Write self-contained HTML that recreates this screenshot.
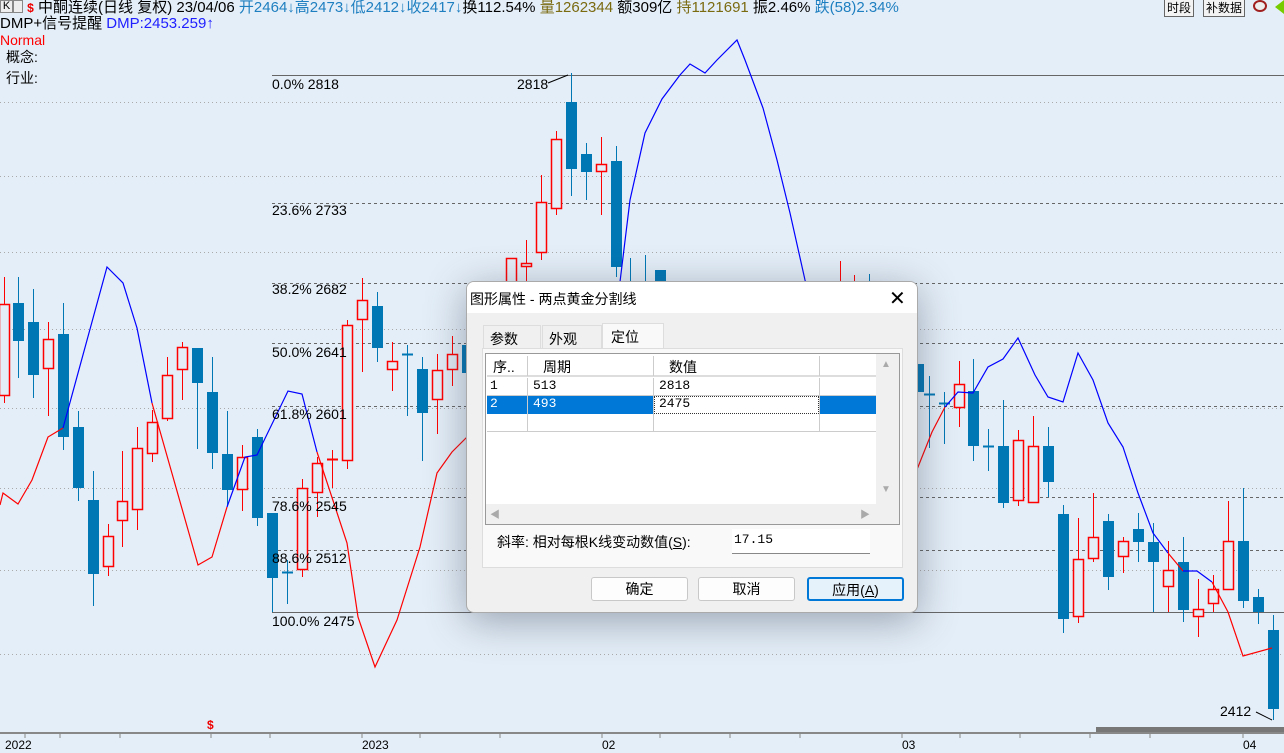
<!DOCTYPE html>
<html><head><meta charset="utf-8"><style>
*{margin:0;padding:0;box-sizing:border-box}
body{width:1284px;height:741px;overflow:hidden;background:#e4eef8;font-family:"Liberation Sans","Noto Sans CJK SC",sans-serif;position:relative}
.t{position:absolute;white-space:nowrap;font-size:14px;line-height:16px}
svg{position:absolute;left:0;top:0}
#dlg{position:absolute;left:466px;top:281px;width:452px;height:332px;background:#f0f0f0;border:1px solid #aaa;border-radius:8px;box-shadow:0 8px 40px rgba(60,70,90,.45);overflow:hidden;font-size:14px}
#dlg .ttl{height:31px;background:#fff;padding:7px 0 0 3px;font-size:14px}
.abs{position:absolute}
.btn{position:absolute;top:295px;height:24px;width:97px;border:1px solid #c8c8c8;border-radius:3px;background:#fdfdfd;text-align:center;line-height:22px}
</style></head><body>
<svg width="1284" height="741" id="ch"></svg>
<div class="t" style="left:0;top:0;font-size:15px">
<span style="display:inline-block;width:13px;height:13px;border:1px solid #888;font-size:11px;line-height:11px;text-align:center;vertical-align:top;background:#eee">K</span><span style="display:inline-block;width:10px;height:13px;border:1px solid #888;vertical-align:top;background:#eee"></span>
<b style="color:#e00;font-size:12px">$</b> 中酮连续(日线 复权) 23/04/06 <span style="color:#1e7fc0">开2464↓高2473↓低2412↓收2417↓</span>换112.54% <span style="color:#7a6a10">量1262344</span> 额309亿 <span style="color:#7a6a10">持1121691</span> 振2.46% <span style="color:#1e7fc0">跌(58)2.34%</span></div>
<div class="t" style="left:0;top:16px;font-size:15px">DMP+信号提醒 <span style="color:#2020ff">DMP:2453.259↑</span></div>
<div class="t" style="left:0;top:32px;color:#f00">Normal</div>
<div class="t" style="left:6px;top:49px">概念:</div>
<div class="t" style="left:6px;top:70px">行业:</div>
<div class="t" style="left:1164px;top:0;font-size:12px;border:1px solid #666;border-top:none;padding:0 2px;background:#f3f3f3">时段</div>
<div class="t" style="left:1203px;top:0;font-size:12px;border:1px solid #666;border-top:none;padding:0 2px;background:#f3f3f3">补数据</div>
<div class="abs" style="left:1253px;top:0;width:14px;height:12px;border-radius:50%;border:2px solid #a02020;background:#eee"></div>
<div class="abs" style="left:1275px;top:0;width:0;height:0;border-top:7px solid transparent;border-bottom:7px solid transparent;border-right:9px solid #7c0"></div>
<div id="lbl"></div>

<div id="dlg">
<div class="ttl">图形属性 - 两点黄金分割线</div>
<div class="abs" style="left:422px;top:4px;font-size:20px">✕</div>
<div class="abs" style="left:16px;top:43px;width:58px;height:23px;border:1px solid #ddd;border-bottom:none;padding:3px 0 0 6px">参数</div>
<div class="abs" style="left:75px;top:43px;width:60px;height:23px;border:1px solid #ddd;border-bottom:none;padding:3px 0 0 6px">外观</div>
<div class="abs" style="left:135px;top:41px;width:62px;height:27px;background:#f9f9f9;border:1px solid #ddd;border-bottom:none;padding:3px 0 0 8px">定位</div>
<div class="abs" style="left:15px;top:66px;width:421px;height:220px;background:#f9f9f9;border:1px solid #ddd"></div>
<div class="abs" style="left:18px;top:71px;width:415px;height:172px;background:#fff;border:1px solid #999"></div>
<div class="abs" style="left:20px;top:73px;width:389px;height:22px;background:#fff;border-bottom:2px solid #ddd"></div>
<div class="abs" style="left:60px;top:74px;width:1px;height:20px;background:#ccc"></div>
<div class="abs" style="left:186px;top:74px;width:1px;height:20px;background:#ccc"></div>
<div class="abs" style="left:352px;top:74px;width:1px;height:20px;background:#ccc"></div>
<div class="abs" style="left:26px;top:75px">序..</div>
<div class="abs" style="left:76px;top:75px">周期</div>
<div class="abs" style="left:202px;top:75px">数值</div>
<div class="abs" style="left:20px;top:96px;width:389px;height:54px;border-bottom:1px solid #ccc"></div>
<div class="abs" style="left:20px;top:114px;width:389px;height:18px;background:#0078d7"></div>
<div class="abs" style="left:187px;top:114px;width:165px;height:18px;background:#fff;border:1px dotted #333"></div>
<div class="abs" style="left:20px;top:113px;width:389px;height:1px;border-top:1px solid #ccc"></div>
<div class="abs" style="left:60px;top:96px;width:1px;height:54px;background:#ccc"></div>
<div class="abs" style="left:186px;top:96px;width:1px;height:54px;background:#ccc"></div>
<div class="abs" style="left:352px;top:96px;width:1px;height:54px;background:#ccc"></div>
<div class="abs" style="left:23px;top:96px;font-family:'Liberation Mono',monospace;font-size:13px">1</div>
<div class="abs" style="left:66px;top:96px;font-family:'Liberation Mono',monospace;font-size:13px">513</div>
<div class="abs" style="left:192px;top:96px;font-family:'Liberation Mono',monospace;font-size:13px">2818</div>
<div class="abs" style="left:23px;top:114px;font-family:'Liberation Mono',monospace;font-size:13px;color:#fff">2</div>
<div class="abs" style="left:66px;top:114px;font-family:'Liberation Mono',monospace;font-size:13px;color:#fff">493</div>
<div class="abs" style="left:192px;top:114px;font-family:'Liberation Mono',monospace;font-size:13px">2475</div>
<div class="abs" style="left:409px;top:72px;width:23px;height:150px;background:#f0f0f0"></div>
<div class="abs" style="left:19px;top:222px;width:413px;height:20px;background:#f0f0f0"></div>
<div class="abs" style="left:414px;top:77px;color:#aaa;font-size:10px">▲</div>
<div class="abs" style="left:414px;top:202px;color:#aaa;font-size:10px">▼</div>
<div class="abs" style="left:23px;top:224px;color:#aaa;font-size:10px">◀</div>
<div class="abs" style="left:393px;top:224px;color:#aaa;font-size:10px">▶</div>
<div class="abs" style="left:30px;top:250px">斜率: 相对每根K线变动数值(<u>S</u>):</div>
<div class="abs" style="left:265px;top:247px;width:138px;height:25px;background:#fff;border-bottom:1px solid #888;padding:3px 0 0 2px;font-family:'Liberation Mono',monospace;font-size:13px">17.15</div>
<div class="btn" style="left:124px">确定</div>
<div class="btn" style="left:231px">取消</div>
<div class="btn" style="left:340px;background:#e5f1fb;border:2px solid #0078d7">应用(<u>A</u>)</div>
</div>

<script>
var s='';
function L(x1,y1,x2,y2,c,d,w){s+='<line x1="'+x1+'" y1="'+y1+'" x2="'+x2+'" y2="'+y2+'" stroke="'+c+'" stroke-width="'+(w||1)+'"'+(d?' stroke-dasharray="'+d+'"':'')+'/>';}
[102,176,252,329,408,488,570,654].forEach(function(y){L(0,y+.5,1284,y+.5,'#aaa','1,3')});
[203,283,343,406,497,550].forEach(function(y){L(272,y+.5,1284,y+.5,'#666','3,3')});
L(272,75.5,1284,75.5,'#666');L(272,612.5,1284,612.5,'#666');
L(0,733,1284,733,'#888',null,2);
[25,60,120,211,270,362,420,500,602,660,730,800,902,960,1020,1090,1150,1243].forEach(function(x){L(x,733,x,738,'#888')});
var C=[[4,'r',304,395,277,403],[18,'b',303,341,277,378],[33,'b',322,375,289,398],[48,'r',339,368,322,416],[63,'b',334,437,303,450],[78,'b',427,488,411,501],[93,'b',500,574,471,606],[108,'r',536,566,524,576],[122,'r',501,520,451,547],[137,'r',448,509,427,530],[152,'r',422,453,410,462],[167,'r',375,418,357,421],[182,'r',347,369,342,400],[197,'b',348,383,357,449],[212,'b',392,453,357,469],[227,'b',454,490,411,505],[242,'r',457,489,445,511],[257,'b',437,518,429,526],[272,'b',513,578,513,612],[287,'b',572,574,560,604],[302,'r',488,569,479,577],[317,'r',463,492,457,517],[332,'r',459,461,450,488],[347,'r',325,460,320,469],[362,'r',300,319,278,372],[377,'b',306,348,292,362],[392,'r',361,369,342,391],[407,'b',354,356,345,416],[422,'b',369,413,357,461],[437,'r',370,399,354,434],[452,'r',354,369,336,386],[467,'b',345,373,335,390],
[511,'r',258,300,258,300],[526,'r',263,266,240,300],[541,'r',202,252,175,260],[556,'r',139,208,131,215],[571,'b',102,169,73,196],[586,'b',154,172,143,200],[601,'r',164,171,137,215],[616,'b',161,267,146,277],[630,'b',290,290,258,290],[645,'b',290,290,255,290],[660,'b',270,290,270,290],[840,'r',290,290,261,290],[854,'r',290,290,275,290],[869,'b',290,290,274,290],
[918,'b',364,392,364,392],[929,'b',394,396,376,448],[944,'b',403,405,392,444],[959,'r',384,407,361,427],[973,'b',391,446,359,461],[988,'b',446,448,429,471],[1003,'b',446,503,400,508],[1018,'r',440,500,430,506],[1033,'r',446,502,416,502],[1048,'b',446,482,427,497],[1063,'b',514,619,505,633],[1078,'r',559,616,518,623],[1093,'r',537,558,493,562],[1108,'b',521,577,514,590],[1123,'r',541,556,537,573],[1138,'b',529,542,513,562],[1153,'b',542,562,523,612],[1168,'r',570,586,541,612],[1183,'b',562,610,537,622],[1198,'r',609,616,579,637],[1213,'r',589,603,575,612],[1228,'r',541,589,501,589],[1243,'b',541,601,488,608],[1258,'b',597,612,589,624],[1273,'b',630,709,615,720]];
C.forEach(function(c){var x=c[0],col=c[1]=='r'?'#f00':'#0077b5';
L(x+.5,c[4],x+.5,c[5],col);
if(c[3]-c[2]<3){L(x-5,c[2]+.5,x+6,c[2]+.5,col,null,2);return;}
if(c[1]=='r')s+='<rect x="'+(x-4.5)+'" y="'+(c[2]+.5)+'" width="10" height="'+(c[3]-c[2])+'" fill="#e4eef8" stroke="#f00" stroke-width="1.5"/>';
else s+='<rect x="'+(x-5)+'" y="'+c[2]+'" width="11" height="'+(c[3]-c[2])+'" fill="#0077b5"/>';});
function P(p,c){s+='<polyline fill="none" stroke="'+c+'" stroke-width="1.2" points="'+p+'"/>';}
P('0,505 3,493 18,504 32,480 48,437 63,428','#f00');
P('63,428 107,267 123,283 137,328 152,403','#00f');
P('152,403 198,565 212,557 227,507','#f00');
P('227,507 245,457 257,455 288,391 302,394 317,452','#00f');
P('317,452 347,543 358,617 375,667 397,620 420,547 437,473 452,452 467,437','#f00');
P('619,290 630,200 645,133 662,99 680,75 690,64 705,73 717,60 737,40 745,60 763,108 777,160 790,213 805,280 810,300','#00f');
P('912,480 918,467 932,432 945,407','#f00');
P('945,407 958,392 973,393 988,367 1003,359 1018,338 1035,375 1048,397 1063,402 1078,353 1093,380 1108,423 1123,447 1138,493 1153,533 1168,553','#00f');
P('1168,553 1183,571','#f00');P('1183,571 1197,571 1212,582','#00f');
P('1212,582 1228,612 1243,656 1272,648','#f00');
L(548,83,568,75,'#000');L(1256,712,1272,720,'#000');
s+='<rect x="1096" y="727" width="188" height="5" fill="#777"/>';
document.getElementById('ch').innerHTML=s;
var lb=[['0.0% 2818',76],['23.6% 2733',202],['38.2% 2682',281],['50.0% 2641',344],['61.8% 2601',406],['78.6% 2545',498],['88.6% 2512',550],['100.0% 2475',613]];
var h='';lb.forEach(function(l){h+='<div class="t" style="left:272px;top:'+l[1]+'px">'+l[0]+'</div>'});
h+='<div class="t" style="left:517px;top:76px">2818</div><div class="t" style="left:1220px;top:703px">2412</div>';
h+='<div class="t" style="left:207px;top:717px;color:#e00;font-size:12px;font-weight:bold">$</div>';
[['2022',5],['2023',362],['02',602],['03',902],['04',1243]].forEach(function(a){h+='<div class="t" style="left:'+a[1]+'px;top:737px;font-size:12px">'+a[0]+'</div>'});
document.getElementById('lbl').innerHTML=h;
</script>
</body></html>
